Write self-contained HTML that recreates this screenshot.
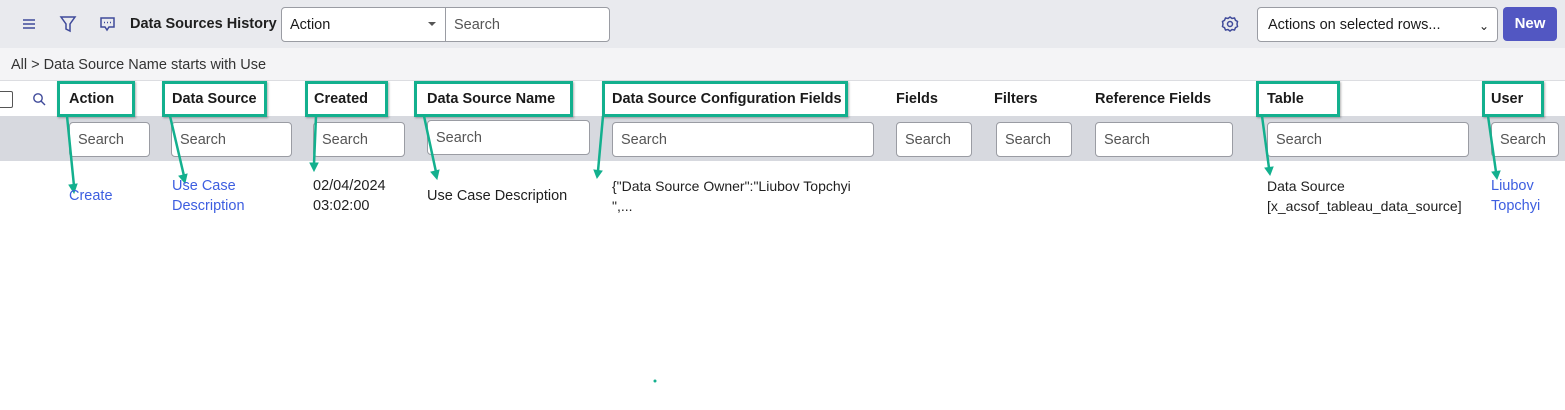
<!DOCTYPE html>
<html><head><meta charset="utf-8"><style>
*{box-sizing:border-box;margin:0;padding:0}
body{width:1565px;height:410px;overflow:hidden;background:#fff;font-family:"Liberation Sans",sans-serif;font-size:14px;color:#1f1f1f;position:relative}
.a{position:absolute}
.inp{position:absolute;background:#fff;border:1px solid #9a9ca3;border-radius:4px;color:#555;font-size:14.5px;padding-left:8px;display:flex;align-items:center}
.h{position:absolute;font-weight:bold;font-size:14.5px;top:91px;color:#1a1a1a;white-space:nowrap}
.box{position:absolute;border:3px solid #13b08e;top:81px;height:36px;box-shadow:1px 1px 2px rgba(0,0,0,.3)}
.lk{color:#3d5ee0}
.d{position:absolute;line-height:20px;font-size:14.5px;white-space:nowrap}
</style></head><body>
<div class="a" style="left:0;top:0;width:1565px;height:48px;background:#e9eaee"></div>
<div class="a" style="left:0;top:48px;width:1565px;height:33px;background:#f4f4f6;border-bottom:1px solid #dcdde1"></div>
<svg class="a" style="left:20px;top:15px" width="110" height="18" viewBox="0 0 110 18" fill="none" stroke="#3f4a9a" stroke-width="1.5">
<path d="M3 5h12M3 9h12M3 13h12"/>
<path d="M41 2h14l-5 7v7l-4-2v-5z"/>
<path d="M81 3h13v9h-5l-2 3-2-3h-4z"/><path d="M84 7.5h1M87 7.5h1M90 7.5h1"/>
</svg>
<div class="a" style="left:130px;top:16px;font-weight:bold;font-size:14.5px">Data Sources History</div>
<div class="inp" style="left:281px;top:7px;width:165px;height:35px;color:#1a1a1a;border-radius:4px 0 0 4px">Action<span style="position:absolute;right:9px;top:14px;border:4px solid transparent;border-top:4px solid #555;border-bottom:0"></span></div>
<div class="inp" style="left:445px;top:7px;width:165px;height:35px;border-radius:0 4px 4px 0">Search</div>
<svg class="a" style="left:1221px;top:15px" width="18" height="18" viewBox="0 0 18 18" fill="none" stroke="#3f4a9a" stroke-width="1.5"><circle cx="9" cy="9" r="2.5"/><path d="M9 2l2 1.5 2.5-.5 1 2.3 2 1.2-.5 2.5.5 2.5-2 1.2-1 2.3-2.5-.5L9 16l-2-1.5-2.5.5-1-2.3-2-1.2.5-2.5L1.5 6.5l2-1.2 1-2.3 2.5.5z"/></svg>
<div class="inp" style="left:1257px;top:7px;width:241px;height:35px;color:#1a1a1a;padding-left:10px">Actions on selected rows...<span style="position:absolute;right:8px;top:11px;font-size:12px">&#8964;</span></div>
<div class="a" style="left:1503px;top:7px;width:54px;height:34px;background:#5257c2;border-radius:4px;color:#fff;font-weight:bold;font-size:15px;text-align:center;line-height:34px">New</div>
<div class="a" style="left:11px;top:57px;font-size:14.5px;color:#333">All &gt; Data Source Name starts with Use</div>
<div class="a" style="left:0;top:116px;width:1565px;height:45px;background:#d7d9df"></div>
<div class="a" style="left:-4px;top:91px;width:17px;height:17px;border:1px solid #555;border-radius:2px;background:#fff"></div>
<svg class="a" style="left:32px;top:92px" width="14" height="14" viewBox="0 0 14 14" fill="none" stroke="#3f4a9a" stroke-width="1.4"><circle cx="6" cy="6" r="4.2"/><path d="M9 9l4 4"/></svg>
<div class="h" style="left:69px">Action</div>
<div class="h" style="left:172px">Data Source</div>
<div class="h" style="left:314px">Created</div>
<div class="h" style="left:427px">Data Source Name</div>
<div class="h" style="left:612px">Data Source Configuration Fields</div>
<div class="h" style="left:896px">Fields</div>
<div class="h" style="left:994px">Filters</div>
<div class="h" style="left:1095px">Reference Fields</div>
<div class="h" style="left:1267px">Table</div>
<div class="h" style="left:1491px">User</div>
<div class="box" style="left:57px;width:78px"></div>
<div class="box" style="left:162px;width:105px"></div>
<div class="box" style="left:305px;width:83px"></div>
<div class="box" style="left:414px;width:159px"></div>
<div class="box" style="left:602px;width:246px"></div>
<div class="box" style="left:1256px;width:84px"></div>
<div class="box" style="left:1482px;width:62px"></div>
<div class="inp" style="left:69px;top:122px;width:81px;height:35px">Search</div>
<div class="inp" style="left:171px;top:122px;width:121px;height:35px">Search</div>
<div class="inp" style="left:313px;top:122px;width:92px;height:35px">Search</div>
<div class="inp" style="left:427px;top:120px;width:163px;height:35px">Search</div>
<div class="inp" style="left:612px;top:122px;width:262px;height:35px">Search</div>
<div class="inp" style="left:896px;top:122px;width:76px;height:35px">Search</div>
<div class="inp" style="left:996px;top:122px;width:76px;height:35px">Search</div>
<div class="inp" style="left:1095px;top:122px;width:138px;height:35px">Search</div>
<div class="inp" style="left:1267px;top:122px;width:202px;height:35px">Search</div>
<div class="inp" style="left:1491px;top:122px;width:68px;height:35px">Search</div>
<svg class="a" style="left:0;top:0" width="1565" height="410" fill="#13b08e" stroke="#13b08e" stroke-width="2.5">
<path d="M67 116L74 186" /><path d="M69 185l5 8 3-9z" stroke-width="1"/>
<path d="M170 116L184 176"/><path d="M179 176l6 7 2-9z" stroke-width="1"/>
<path d="M316 116L314 164"/><path d="M310 163l4 8 4-8z" stroke-width="1"/>
<path d="M424 116L436 172"/><path d="M431 172l6 7 2-9z" stroke-width="1"/>
<path d="M603 116L598 171"/><path d="M594 170l3 8 5-7z" stroke-width="1"/>
<path d="M1262 116L1269 168"/><path d="M1265 168l5 7 3-8z" stroke-width="1"/>
<path d="M1488 116L1496 172"/><path d="M1492 172l5 7 3-8z" stroke-width="1"/>
<circle cx="655" cy="381" r="1.5" stroke="none"/>
</svg>
<div class="d lk" style="left:69px;top:186px">Create</div>
<div class="d lk" style="left:172px;top:176px">Use Case<br>Description</div>
<div class="d" style="left:313px;top:176px">02/04/2024<br>03:02:00</div>
<div class="d" style="left:427px;top:186px">Use Case Description</div>
<div class="d" style="left:612px;top:176px;font-size:14px">{"Data Source Owner":"Liubov Topchyi<br>",...</div>
<div class="d" style="left:1267px;top:176px;font-size:14px">Data Source<br>[x_acsof_tableau_data_source]</div>
<div class="d lk" style="left:1491px;top:176px">Liubov<br>Topchyi</div>
</body></html>
